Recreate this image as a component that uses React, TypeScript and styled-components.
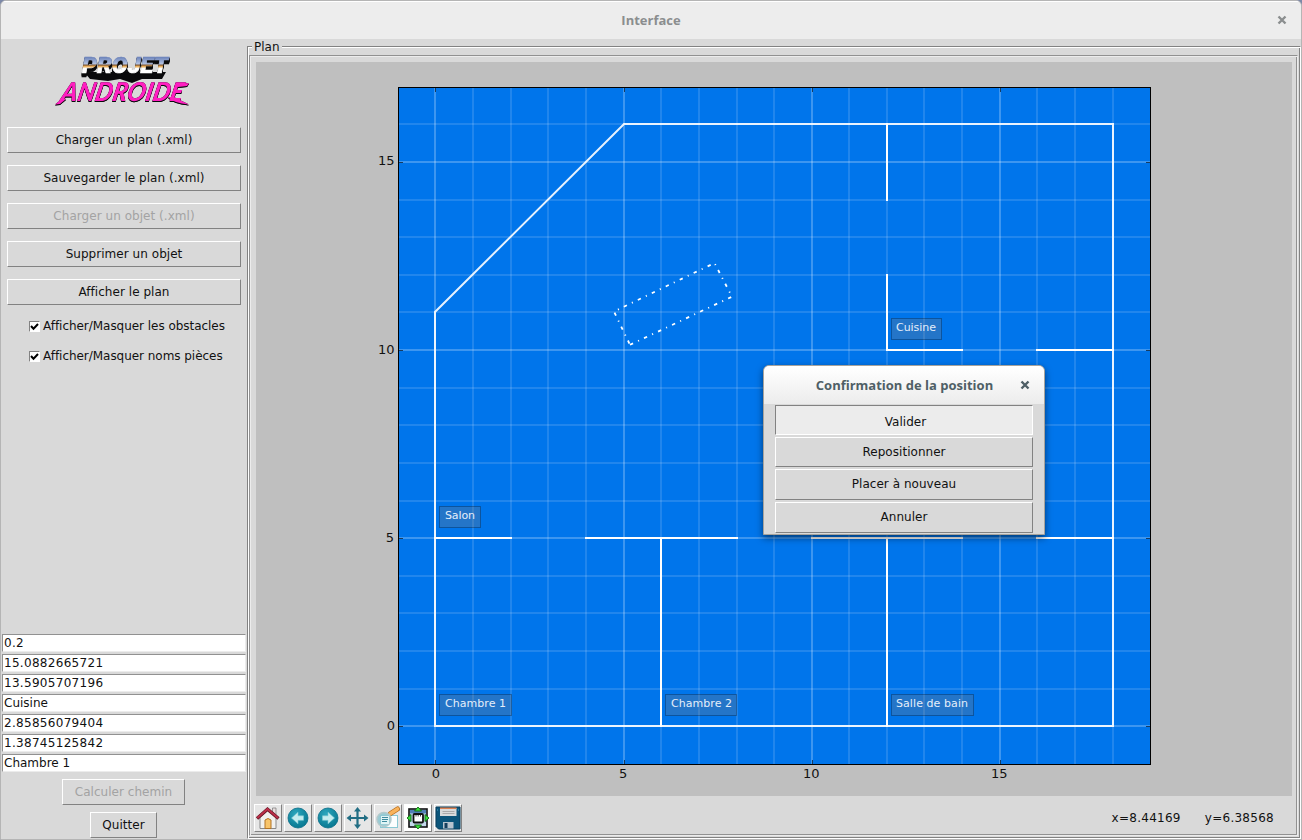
import React from "react";
import styled, { createGlobalStyle } from "styled-components";

const GlobalStyle = createGlobalStyle`
  html, body { margin: 0; padding: 0; overflow: hidden; }
  body { background: #7d89a8; }
  *, *::before, *::after { box-sizing: border-box; }
  button, input { font-family: inherit; font-size: inherit; }
`;

const Window = styled.div`
  width: 1302px;
  height: 840px;
  display: flex;
  flex-direction: column;
  position: relative;
  border: 1px solid #b5b5b5;
  border-radius: 6px 6px 0 0;
  background: #d9d9d9;
  overflow: hidden;
  font-family: "DejaVu Sans", sans-serif;
  font-size: 12px;
  color: #111;
`;

const TitleBar = styled.header<{ $dialog?: boolean }>`
  height: 38px;
  flex: none;
  display: flex;
  align-items: center;
  border-top: 1px solid #fff;
  background: ${(p) => (p.$dialog ? "linear-gradient(#fff, #ececec)" : "#ededed")};
  color: ${(p) => (p.$dialog ? "#4f5f66" : "#8b8e8f")};
  font-family: "Open Sans", "Noto Sans", sans-serif;
  font-weight: 700;
  font-size: 13px;
`;

const TitleText = styled.h1<{ $shift?: number }>`
  flex: 1;
  margin: 0;
  padding: 0 0 2px ${(p) => p.$shift ?? 0}px;
  font: inherit;
  text-align: center;
`;

const CloseButton = styled.button`
  width: 38px;
  height: 36px;
  padding: 0 0 1px;
  border: 0;
  background: none;
  color: inherit;
  display: grid;
  place-items: center;
`;

const Body = styled.div`
  flex: 1;
  display: flex;
  min-height: 0;
`;

const Sidebar = styled.aside`
  width: 246px;
  display: flex;
  flex-direction: column;
  padding-top: 12px;
`;

const LogoBox = styled.div`
  height: 76px;
  flex: none;
  padding-left: 48px;
`;

const ButtonList = styled.div`
  display: flex;
  flex-direction: column;
  gap: 12px;
  padding: 0 6px;
`;

const TkButton = styled.button<{ $w?: number; $h?: number; $pressed?: boolean }>`
  width: ${(p) => (p.$w ? `${p.$w}px` : "100%")};
  height: ${(p) => p.$h ?? 26}px;
  flex: none;
  padding: ${(p) => (p.$pressed ? "3px 0 0 3px" : p.$h === 31 ? "0 0 2px" : "0")};
  line-height: 22px;
  border: 1px solid;
  border-color: ${(p) => (p.$pressed ? "#828282 #fff #fff #828282" : "#fff #828282 #828282 #fff")};
  background: ${(p) => (p.$pressed ? "#ececec" : "#d9d9d9")};
  color: #111;
  text-align: center;
  letter-spacing: 0.04px;
  &:disabled { color: #a3a3a3; }
`;

const Checks = styled.div`
  display: flex;
  flex-direction: column;
  gap: 14px;
  padding: 13px 0 0 28px;
`;

const CheckRow = styled.label`
  height: 16px;
  display: flex;
  align-items: center;
  gap: 3px;
  white-space: nowrap;
  letter-spacing: -0.04px;
`;

const CheckBox = styled.span`
  width: 11px;
  height: 11px;
  margin-top: 1px;
  border: 1px solid;
  border-color: #828282 #fff #fff #828282;
  background: #fff;
  display: grid;
  place-items: center;
`;

const Fields = styled.div`
  display: flex;
  flex-direction: column;
  gap: 2px;
  margin-top: auto;
  padding: 0 1px;
`;

const Field = styled.input`
  width: 244px;
  height: 18px;
  padding: 0 1px;
  border: 1px solid;
  border-color: #919191 #ececec #ececec #919191;
  border-radius: 0;
  background: #fff;
  color: #111;
  outline: none;
  letter-spacing: ${(p) => (/^\d/.test(String(p.defaultValue)) ? "0.3px" : "0")};
`;

const Actions = styled.div`
  display: flex;
  flex-direction: column;
  align-items: center;
  gap: 7px;
  padding: 7px 1px 1px 0;
`;

const PlanFrame = styled.section`
  position: relative;
  width: 1054px;
  margin-top: 7px;
  padding-top: 7px;
  border: 1px solid;
  border-color: #828282 #fff #fff #828282;
  box-shadow: inset 1px 1px #fff, inset -1px -1px #828282;
`;

const PlanLegend = styled.span`
  position: absolute;
  left: 4px;
  top: -8px;
  padding: 0 2px;
  line-height: 16px;
  background: #d9d9d9;
`;

const PlanInner = styled.div`
  margin: 1px 2px 2px 1px;
  height: 781px;
  border: 1px solid;
  border-color: #919191 #ececec #ececec #919191;
  box-shadow: inset 1px 1px #ececec, inset -1px -1px #919191;
  padding: 6px 5px 3px 4px;
  display: flex;
  flex-direction: column;
`;

const Canvas = styled.div`
  width: 1036px;
  height: 734px;
  margin-left: 2px;
  flex: none;
  background: #bfbfbf;
`;

const Toolbar = styled.div`
  display: flex;
  gap: 2px;
  padding-top: 8px;
`;

const ToolButton = styled.button`
  width: 28px;
  height: 28px;
  padding: 0;
  border: 1px solid;
  border-color: #fff #828282 #828282 #fff;
  background: #e6e6e6;
  display: grid;
  place-items: center;
`;

const Coordinates = styled.div`
  margin-left: auto;
  padding-right: 18px;
  line-height: 28px;
  white-space: pre;
  letter-spacing: 0.27px;
  display: flex;
  gap: 24px;
`;

const Dialog = styled.div`
  position: absolute;
  left: 762px;
  top: 364px;
  width: 282px;
  height: 170px;
  display: flex;
  flex-direction: column;
  border: 1px solid #a7a39c;
  border-radius: 6px 6px 0 0;
  background: #d9d9d9;
  box-shadow: 0 3px 7px rgba(0, 0, 0, 0.5);
  overflow: hidden;
`;

const DialogBody = styled.div`
  display: flex;
  flex-direction: column;
  gap: 2px;
  padding: 1px 11px 0;
`;

const GX = [435, 473, 511, 548, 586, 624, 661, 699, 737, 774, 812, 849, 887, 924, 962, 1000, 1037, 1075, 1113];
const GY = [726, 689, 651, 613, 576, 538, 501, 463, 425, 388, 350, 312, 275, 237, 200, 162, 124];

const WALLS: [number, number, number, number][] = [
  [0, 5, 2, 5], [4, 5, 8, 5], [10, 5, 14, 5], [16, 5, 18, 5],
  [6, 0, 6, 5], [12, 0, 12, 5],
  [12, 10, 14, 10], [16, 10, 18, 10], [12, 10, 12, 12], [12, 14, 12, 16],
];

const ROOMS = [
  { name: "Salon", x: 439, y: 506, w: 42, t: 30, dx: 6 },
  { name: "Chambre 1", x: 439, y: 694, w: 73, t: 61, dx: 6 },
  { name: "Chambre 2", x: 665, y: 694, w: 72, t: 61, dx: 6 },
  { name: "Salle de bain", x: 891, y: 694, w: 83, t: 72, dx: 5 },
  { name: "Cuisine", x: 891, y: 318, w: 51, t: 40, dx: 5 },
];

const PlotText = styled.text`
  font-family: "DejaVu Sans", sans-serif;
  font-size: 13px;
  fill: #111;
`;

const RoomText = styled.text`
  font-family: "DejaVu Sans", sans-serif;
  font-size: 11px;
  fill: #e4eefa;
`;

const PlanSvg = styled.svg`
  display: block;
`;

function Plan() {
  return (
    <PlanSvg width="1036" height="734" viewBox="256 62 1036 734">
      <rect x="398.5" y="87.5" width="752" height="677" fill="#0075eb" />
      {GX.map((x, i) => (
        <rect key={x} x={x - 1} y="88" width="2" height="676" fill="#fff" opacity={i % 5 ? 0.13 : 0.24} />
      ))}
      {GY.map((y, i) => (
        <rect key={y} x="399" y={y - 1} width="751" height="2" fill="#fff" opacity={i % 5 ? 0.13 : 0.24} />
      ))}
      <g stroke="#fff" strokeWidth="2" fill="none" strokeLinecap="square">
        <path d="M435 726H1113V124H624L435 312Z" strokeOpacity="0.9" />
        {WALLS.map(([a, b, c, d]) => (
          <line key={`${a}-${b}-${c}-${d}`} x1={GX[a]} y1={GY[b]} x2={GX[c]} y2={GY[d]} />
        ))}
      </g>
      <path
        d="M630 344.8L732 296.7L714.5 263L614 311.5Z"
        fill="none"
        stroke="#fff"
        strokeWidth="1.8"
        strokeDasharray="3.4 5.5 1.1 5.5"
      />
      {ROOMS.map((r) => (
        <g key={r.name}>
          <rect x={r.x + 0.5} y={r.y + 0.5} width={r.w - 1} height="21" fill="#777" fillOpacity="0.3" stroke="#000" strokeOpacity="0.28" />
          <RoomText x={r.x + r.dx} y={r.y + 13} textLength={r.t}>{r.name}</RoomText>
        </g>
      ))}
      <rect x="398.5" y="87.5" width="752" height="677" fill="none" stroke="#000" />
      <g stroke="#000" strokeOpacity="0.6">
        {[0, 5, 10, 15].map((n) => (
          <path key={n} d={`M${GX[n] + 0.5} 764v-4M${GX[n] + 0.5} 88v4M399 ${GY[n] + 0.5}h4M1150 ${GY[n] + 0.5}h-4`} />
        ))}
      </g>
      {[0, 5, 10, 15].map((n) => (
        <React.Fragment key={n}>
          <PlotText x={GX[n] + (n ? -0.8 : 1)} y="778" textAnchor="middle">{n}</PlotText>
          <PlotText x={n > 5 ? 394.6 : n ? 394 : 395} y={GY[n] + (n === 15 ? 3 : 4)} textAnchor="end">{n}</PlotText>
        </React.Fragment>
      ))}
    </PlanSvg>
  );
}

const ProjetText = styled.text`
  font-family: Roboto, sans-serif;
  font-weight: 900;
  font-style: italic;
  font-size: 22px;
  stroke-width: 0.7px;
  filter: drop-shadow(0.5px 1px 0 #0a0a0c) drop-shadow(0 1px 0 #0a0a0c) drop-shadow(0 2px 0 #0a0a0c);
`;

const AndroideText = styled.g`
  font-family: Lato, sans-serif;
  font-weight: 900;
  font-style: italic;
  font-size: 26px;
  fill: #ff1fc0;
  filter: drop-shadow(0.5px 1.2px 0 #0a0a0c) drop-shadow(0.3px 0.8px 0 #0a0a0c);
`;

function Logo() {
  return (
    <svg width="150" height="60" viewBox="49 51 150 60">
      <defs>
        <linearGradient id="chrome" x1="0" y1="57" x2="0" y2="73" gradientUnits="userSpaceOnUse">
          <stop offset="0" stopColor="#6b82ba" />
          <stop offset="0.44" stopColor="#b5c4e2" />
          <stop offset="0.5" stopColor="#7a5230" />
          <stop offset="0.58" stopColor="#e9a94e" />
          <stop offset="0.72" stopColor="#fff" />
        </linearGradient>
      </defs>
      <path d="M84 72L90 79L108 81L120 79L132 83L142 79L162 79L166 72Z" fill="#0a0a0c" />
      <ProjetText x="82" y="72.500" textLength="86" lengthAdjust="spacingAndGlyphs" fill="url(#chrome)" stroke="url(#chrome)">PROJET</ProjetText>
      <AndroideText>
        <g transform="translate(0 101) skewX(-12)">
          <text x="60" y="0" textLength="122" lengthAdjust="spacingAndGlyphs">ANDROIDE</text>
        </g>
        <path d="M63 98L55 104.500L60 104L66 99Z" />
        <path d="M168 97Q173 103 189 104.500Q178 99 174 97Z" />
        <path d="M174 85L189 83L187 86L178 87Z" />
      </AndroideText>
    </svg>
  );
}

function Cross() {
  return (
    <svg width="10" height="10" viewBox="0 0 10 10">
      <path d="M1.500 1.500L8.500 8.500M8.500 1.500L1.500 8.500" stroke="currentColor" strokeWidth="2.400" />
    </svg>
  );
}

function Tick() {
  return (
    <svg width="9" height="9" viewBox="0 0 9 9">
      <path d="M1 3.500L3.500 6.200L8 1.500" transform="translate(0 .5)" fill="none" stroke="#000" strokeWidth="2" />
    </svg>
  );
}

function Arrow({ id, flip }: { id: string; flip?: boolean }) {
  return (
    <svg width="24" height="24" viewBox="0 0 24 24">
      <defs>
        <radialGradient id={id} cx="0.4" cy="0.3" r="0.7">
          <stop offset="0" stopColor="#2ba6bd" />
          <stop offset="1" stopColor="#087992" />
        </radialGradient>
      </defs>
      <circle cx="12" cy="12" r="10" fill={`url(#${id})`} stroke="#086c86" strokeWidth="0.8" />
      <path
        transform={flip ? "translate(24 0) scale(-1 1)" : undefined}
        d="M5.500 12L12 6.200V9.800H17.500V14.300H12V17.800Z"
        fill="#c4ecef"
        stroke="#7ecbd3"
        strokeWidth="0.6"
      />
    </svg>
  );
}

const HomeIcon = () => (
  <svg width="26" height="26" viewBox="0 0 26 26">
    <path d="M5 12L13 5L21 12V23.500H5Z" fill="#f1f1ef" stroke="#898989" />
    <path d="M17.500 3h3.500v7l-3.500-3z" fill="#e7dede" stroke="#777" strokeWidth="0.7" />
    <path d="M2 13.500L12.500 4.200L23.500 13.500" fill="none" stroke="#641726" strokeWidth="3.400" />
    <path d="M2.300 13L12.500 4L23 13" fill="none" stroke="#bc2f49" strokeWidth="2" />
    <path d="M10 23.500V15q3-3 6 0v8.500z" fill="#f8c469" stroke="#b37426" />
  </svg>
);

const MoveIcon = () => (
  <svg width="26" height="26" viewBox="0 0 26 26">
    <path d="M12.500 4V22M4 13H22" stroke="#216e84" strokeWidth="2.200" />
    <path d="M12.500 2l3.500 4.500H9zM12.500 24l3.500-4.500H9zM1.500 13L6 9.500v7zM23.500 13L19 9.500v7z" fill="#216e84" />
  </svg>
);

const ZoomIcon = () => (
  <svg width="26" height="26" viewBox="0 0 26 26">
    <rect x="5.500" y="10.500" width="17" height="12" fill="#fcfefe" stroke="#8ac8d3" />
    <path d="M15.500 8.500L22.500 4" stroke="#b66a18" strokeWidth="5" strokeLinecap="round" />
    <path d="M15.500 8.500L22.500 4" stroke="#f9b35b" strokeWidth="3.600" strokeLinecap="round" />
    <circle cx="9" cy="14.500" r="7" fill="#8fc8d1" fillOpacity="0.9" stroke="#b3c9cc" strokeWidth="1.500" />
    <rect x="6" y="11" width="8" height="8" fill="#e1f4f5" />
    <path d="M7 12.500h6M7 14.500h6M7 16.500h5" stroke="#3f8b9e" />
  </svg>
);

const SubplotsIcon = () => (
  <svg width="26" height="26" viewBox="0 0 26 26">
    <rect x="0" y="0" width="26" height="26" fill="#fff" />
    <rect x="4" y="4" width="18" height="18" fill="#c4d9ed" stroke="#111" strokeWidth="1.600" />
    <rect x="5" y="5" width="16" height="3.500" fill="#507fb5" />
    <rect x="8.500" y="9" width="9.500" height="8.500" rx="1" fill="#fff" stroke="#111" strokeWidth="1.800" />
    <path d="M11 9v2.500M13.200 9v2.500M15.500 9v2.500" stroke="#111" strokeWidth="0.800" />
    <path d="M13 2l3.500 4h-7zM13 24l3.500-4h-7zM2 13l4-3.500v7zM24 13l-4-3.500v7z" fill="#3ce33e" stroke="#116611" strokeWidth="0.900" />
  </svg>
);

const SaveIcon = () => (
  <svg width="26" height="26" viewBox="0 0 26 26">
    <path d="M1 2H25V24H3.500L1 21.500Z" fill="#0c557a" stroke="#083e5d" />
    <rect x="5" y="3" width="16.500" height="8" fill="#d9dbdb" />
    <rect x="5" y="2.500" width="16.500" height="1.500" fill="#dd8152" />
    <path d="M7.500 6.500h12M7.500 8.500h12" stroke="#aaa" />
    <rect x="8" y="17" width="10.500" height="6.500" fill="#b7c4ce" />
    <rect x="9.500" y="18" width="3" height="5" fill="#143e5d" />
    <path d="M2.500 4v2M23.500 4v2" stroke="#2a7ba2" />
  </svg>
);

const FIELDS = ["0.2", "15.0882665721", "13.5905707196", "Cuisine", "2.85856079404", "1.38745125842", "Chambre 1"];

export default function App() {
  return (
    <>
      <GlobalStyle />
      <Window>
        <TitleBar>
          <TitleText $shift={38}>Interface</TitleText>
          <CloseButton><Cross /></CloseButton>
        </TitleBar>
        <Body>
          <Sidebar>
            <LogoBox><Logo /></LogoBox>
            <ButtonList>
              <TkButton>Charger un plan (.xml)</TkButton>
              <TkButton>Sauvegarder le plan (.xml)</TkButton>
              <TkButton disabled>Charger un objet (.xml)</TkButton>
              <TkButton>Supprimer un objet</TkButton>
              <TkButton>Afficher le plan</TkButton>
            </ButtonList>
            <Checks>
              <CheckRow><CheckBox><Tick /></CheckBox>Afficher/Masquer les obstacles</CheckRow>
              <CheckRow><CheckBox><Tick /></CheckBox>Afficher/Masquer noms pièces</CheckRow>
            </Checks>
            <Fields>
              {FIELDS.map((f) => <Field key={f} defaultValue={f} />)}
            </Fields>
            <Actions>
              <TkButton $w={123} disabled>Calculer chemin</TkButton>
              <TkButton $w={67}>Quitter</TkButton>
            </Actions>
          </Sidebar>
          <PlanFrame>
            <PlanLegend>Plan</PlanLegend>
            <PlanInner>
              <Canvas><Plan /></Canvas>
              <Toolbar>
                <ToolButton><HomeIcon /></ToolButton>
                <ToolButton><Arrow id="back" /></ToolButton>
                <ToolButton><Arrow id="forward" flip /></ToolButton>
                <ToolButton><MoveIcon /></ToolButton>
                <ToolButton><ZoomIcon /></ToolButton>
                <ToolButton><SubplotsIcon /></ToolButton>
                <ToolButton><SaveIcon /></ToolButton>
                <Coordinates><span>x=8.44169</span><span>y=6.38568</span></Coordinates>
              </Toolbar>
            </PlanInner>
          </PlanFrame>
        </Body>
        <Dialog>
          <TitleBar $dialog>
            <TitleText $shift={39}>Confirmation de la position</TitleText>
            <CloseButton><Cross /></CloseButton>
          </TitleBar>
          <DialogBody>
            <TkButton $h={30} $pressed>Valider</TkButton>
            <TkButton $h={30}>Repositionner</TkButton>
            <TkButton $h={31}>Placer à nouveau</TkButton>
            <TkButton $h={31}>Annuler</TkButton>
          </DialogBody>
        </Dialog>
      </Window>
    </>
  );
}
